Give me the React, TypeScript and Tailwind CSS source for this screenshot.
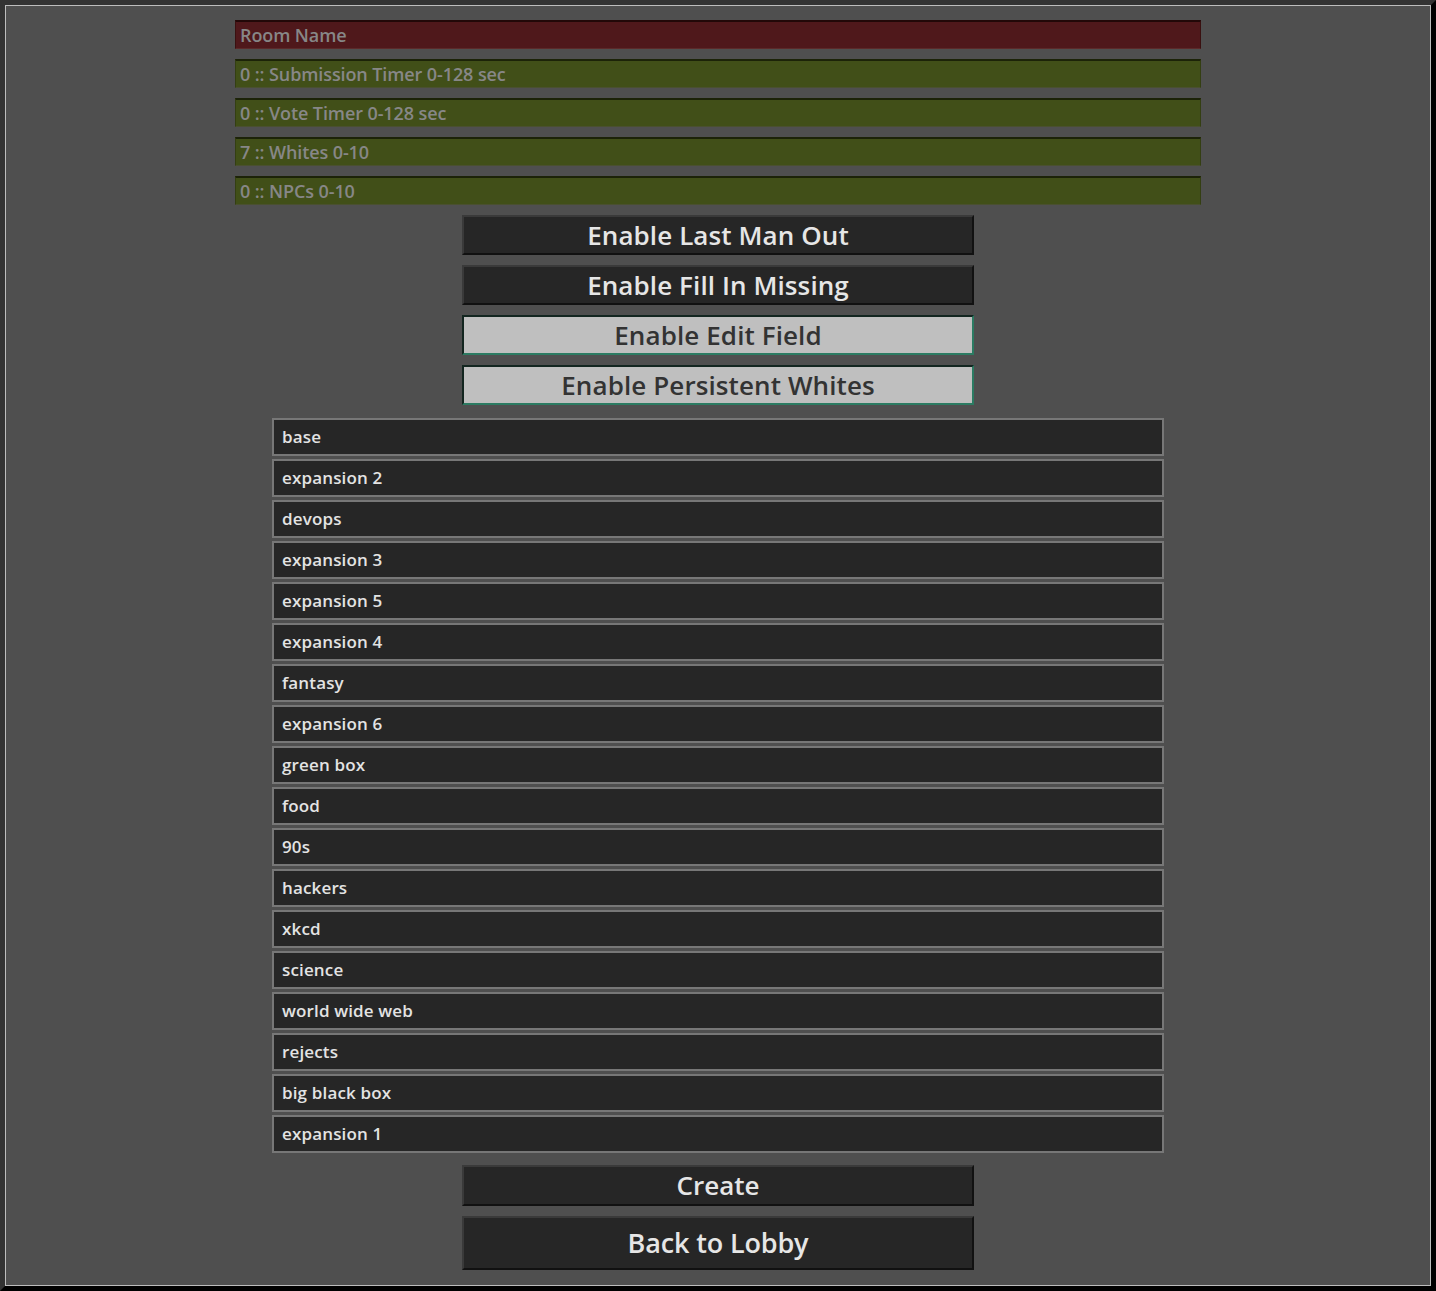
const fields = [
  { text: "Room Name", red: true },
  { text: "0 :: Submission Timer 0-128 sec" },
  { text: "0 :: Vote Timer 0-128 sec" },
  { text: "7 :: Whites 0-10" },
  { text: "0 :: NPCs 0-10" },
];

const toggles = [
  { label: "Enable Last Man Out", on: false },
  { label: "Enable Fill In Missing", on: false },
  { label: "Enable Edit Field", on: true },
  { label: "Enable Persistent Whites", on: true },
];

const packs = [
  "base",
  "expansion 2",
  "devops",
  "expansion 3",
  "expansion 5",
  "expansion 4",
  "fantasy",
  "expansion 6",
  "green box",
  "food",
  "90s",
  "hackers",
  "xkcd",
  "science",
  "world wide web",
  "rejects",
  "big black box",
  "expansion 1",
];

export default function App() {
  return (
    <div
      className="min-h-[1291px] w-[1436px] border-[5px] border-t-[#333] border-l-[#333] border-r-black border-b-black bg-[#4f4f4f]"
      style={{ fontFamily: "'Open Sans', 'Noto Sans', sans-serif" }}
    >
      <div className="flex min-h-[1281px] flex-col items-center border border-[#bdbdbd] bg-[#4f4f4f] pt-[14px]">
        {/* settings inputs */}
        <div className="flex w-[966px] flex-col gap-[10px]">
          {fields.map((f) => (
            <div
              key={f.text}
              className={`flex h-[29px] items-center border-t-2 border-b border-x px-[4px] text-[18px] font-semibold tracking-[-0.1px] text-[#878787] ${
                f.red
                  ? "border-t-[#220808] border-b-[#5c2a2a] border-x-[#3a1010] bg-[#4f181b]"
                  : "border-t-[#1c2308] border-b-[#4a5030] border-x-[#343f12] bg-[#414f18]"
              }`}
            >
              {f.text}
            </div>
          ))}
        </div>

        {/* toggles */}
        <div className="mt-[10px] flex flex-col gap-[10px]">
          {toggles.map((t) => (
            <button
              key={t.label}
              className={`flex h-[40px] w-[512px] items-center justify-center border-2 text-[26px] font-semibold tracking-[0.1px] ${
                t.on
                  ? "border-t-[#132620] border-l-[#132620] border-b-[#2b7b62] border-r-[#2b7b62] bg-[#bfbfbf] text-[#333]"
                  : "border-t-[#3a3a3a] border-l-[#3a3a3a] border-b-[#111] border-r-[#111] bg-[#262626] text-[#e6e6e6]"
              }`}
            >
              {t.label}
            </button>
          ))}
        </div>

        {/* card packs */}
        <div className="mt-[13px] flex w-[892px] flex-col gap-[3px]">
          {packs.map((p) => (
            <div
              key={p}
              className="flex h-[38px] items-center border-2 border-[#777] bg-[#262626] pl-[8px] text-[17px] font-semibold tracking-[0.15px] text-[#e3e3e3]"
            >
              {p}
            </div>
          ))}
        </div>

        {/* actions */}
        <div className="mt-[12px] flex flex-col gap-[10px]">
          <button className="flex h-[41px] w-[512px] items-center justify-center border-2 border-t-[#3a3a3a] border-l-[#3a3a3a] border-b-[#111] border-r-[#111] bg-[#262626] text-[26px] font-semibold text-[#e6e6e6]">
            Create
          </button>
          <button className="flex h-[54px] w-[512px] items-center justify-center border-2 border-t-[#3a3a3a] border-l-[#3a3a3a] border-b-[#111] border-r-[#111] bg-[#262626] text-[27px] font-semibold tracking-[-0.15px] text-[#e6e6e6]">
            Back to Lobby
          </button>
        </div>
      </div>
    </div>
  );
}
